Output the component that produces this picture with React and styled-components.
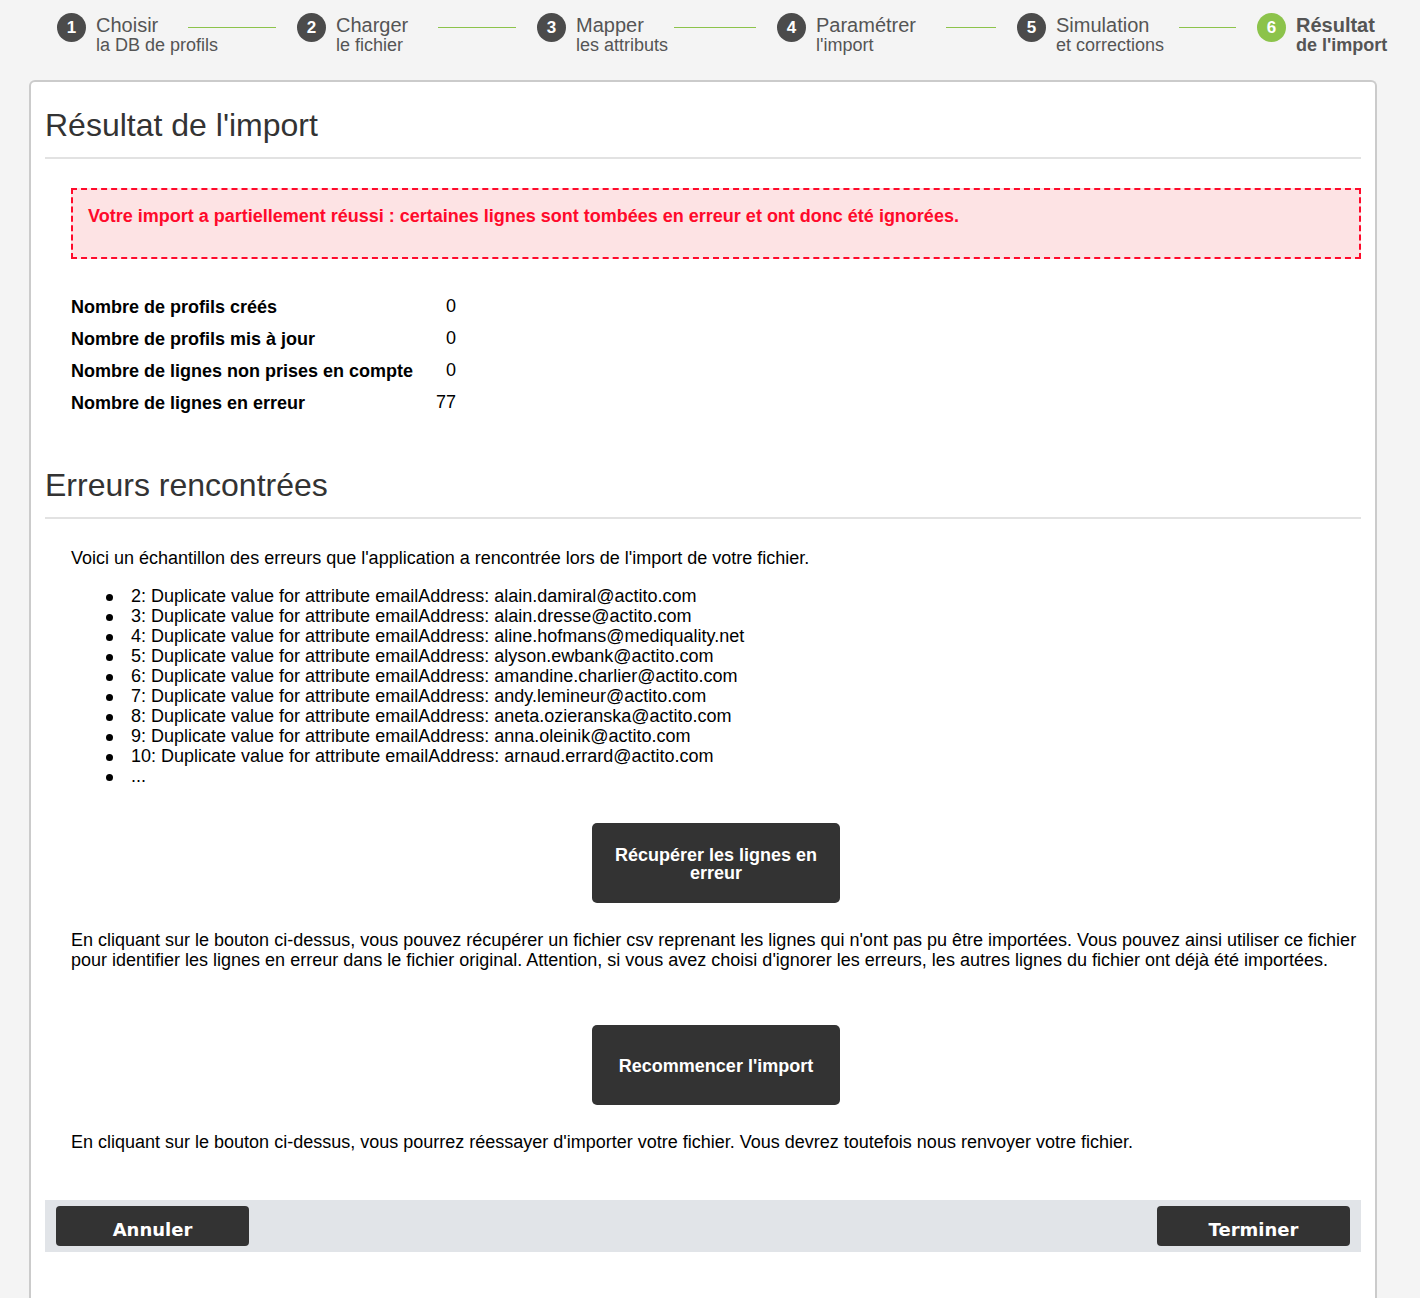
import React from "react";
import styled, { createGlobalStyle } from "styled-components";

const Global = createGlobalStyle`
  html, body { margin: 0; padding: 0; background: #f4f4f4; }
  body { font-family: "Liberation Sans", Arial, Helvetica, sans-serif; color: #000; }
  * { box-sizing: border-box; }
`;

const Stepper = styled.div`
  display: flex;
  height: 80px;
  padding: 13px 0 0 57px;
`;

const Step = styled.div`
  display: flex;
  align-items: flex-start;
  width: ${(p) => (p.$last ? "auto" : "240px")};
  flex-shrink: 0;
`;

const Circle = styled.div`
  width: 29px;
  height: 29px;
  border-radius: 50%;
  background: ${(p) => (p.$active ? "#8cc34b" : "#4b4b4b")};
  color: #fff;
  font-weight: bold;
  font-size: 17px;
  display: flex;
  align-items: center;
  justify-content: center;
  flex-shrink: 0;
  margin-right: 10px;
`;

const StepText = styled.div`
  flex: 1;
  margin-top: 2px;
  margin-right: 21px;
  color: #555;
  font-weight: ${(p) => (p.$active ? "bold" : "normal")};
`;

const StepTitleRow = styled.div`
  display: flex;
  align-items: center;
  font-size: 20px;
  line-height: 20px;
`;

const StepLine = styled.div`
  flex: 1;
  height: 1px;
  background: #8cc34b;
  margin: 4px 0 0 30px;
`;

const StepSub = styled.div`
  font-size: 18px;
  line-height: 21px;
`;

const Card = styled.div`
  margin: 0 43px 0 29px;
  background: #fff;
  border: 2px solid #cbcbcb;
  border-bottom: none;
  border-radius: 6px 6px 0 0;
  padding: 0 14px 60px;
`;

const Heading = styled.h2`
  margin: 23px 0 0;
  font-size: 32px;
  line-height: 40px;
  font-weight: normal;
  color: #333;
`;

const Rule = styled.div`
  height: 2px;
  background: #e2e2e2;
  margin-top: 12px;
`;

const Indented = styled.div`
  margin-left: 26px;
`;

const Alert = styled.div`
  margin-top: 29px;
  border: 2px dashed #ff0a2b;
  background: #fde3e4;
  padding: 16px 15px 31px;
  color: #ff0a2b;
  font-weight: bold;
  font-size: 18px;
  line-height: 20px;
`;

const Stats = styled.div`
  display: grid;
  grid-template-columns: 350px 35px;
  margin-top: 32px;
  font-size: 18px;
  line-height: 32px;
`;

const StatLabel = styled.div`
  font-weight: bold;
`;

const StatValue = styled.div`
  text-align: right;
  position: relative;
  top: -1px;
`;

const SecondHeading = styled(Heading)`
  margin-top: 46px;
`;

const Para = styled.p`
  margin: ${(p) => p.$mt || 0}px 0 0;
  font-size: 18px;
  line-height: 20px;
`;

const ErrorList = styled.ul`
  margin: 18px 0 0;
  padding-left: 60px;
  font-size: 18px;
  line-height: 20px;
  list-style: none;
`;

const ErrorItem = styled.li`
  position: relative;
  &::before {
    content: "";
    position: absolute;
    left: -25px;
    top: 8px;
    width: 7px;
    height: 7px;
    border-radius: 50%;
    background: #000;
  }
`;

const Center = styled.div`
  display: flex;
  justify-content: center;
  margin-top: ${(p) => p.$mt}px;
`;

const BigButton = styled.button`
  width: 248px;
  height: 80px;
  background: #333;
  color: #fff;
  border: none;
  border-radius: 5px;
  padding: 2px 18px 0;
  font-family: "Liberation Sans", Arial, sans-serif;
  font-weight: bold;
  font-size: 18px;
  line-height: 18px;
  cursor: pointer;
`;

const Footer = styled.div`
  margin-top: 48px;
  background: #e1e4e8;
  padding: 6px 11px;
  display: flex;
  justify-content: space-between;
`;

const FooterButton = styled.button`
  width: 193px;
  height: 40px;
  background: #333;
  color: #fff;
  border: none;
  border-radius: 4px;
  font-family: "DejaVu Sans", Verdana, sans-serif;
  font-weight: bold;
  font-size: 18px;
  padding: 7px 0 0;
  cursor: pointer;
`;

const steps = [
  ["Choisir", "la DB de profils"],
  ["Charger", "le fichier"],
  ["Mapper", "les attributs"],
  ["Paramétrer", "l'import"],
  ["Simulation", "et corrections"],
  ["Résultat", "de l'import"],
];

const errors = [
  "2: Duplicate value for attribute emailAddress: alain.damiral@actito.com",
  "3: Duplicate value for attribute emailAddress: alain.dresse@actito.com",
  "4: Duplicate value for attribute emailAddress: aline.hofmans@mediquality.net",
  "5: Duplicate value for attribute emailAddress: alyson.ewbank@actito.com",
  "6: Duplicate value for attribute emailAddress: amandine.charlier@actito.com",
  "7: Duplicate value for attribute emailAddress: andy.lemineur@actito.com",
  "8: Duplicate value for attribute emailAddress: aneta.ozieranska@actito.com",
  "9: Duplicate value for attribute emailAddress: anna.oleinik@actito.com",
  "10: Duplicate value for attribute emailAddress: arnaud.errard@actito.com",
  "...",
];

const stats = [
  ["Nombre de profils créés", "0"],
  ["Nombre de profils mis à jour", "0"],
  ["Nombre de lignes non prises en compte", "0"],
  ["Nombre de lignes en erreur", "77"],
];

export default function App() {
  return (
    <>
      <Global />
      <Stepper>
        {steps.map(([t, s], i) => {
          const last = i === steps.length - 1;
          return (
            <Step key={t} $last={last}>
              <Circle $active={last}>{i + 1}</Circle>
              <StepText $active={last}>
                <StepTitleRow>
                  <span>{t}</span>
                  {!last && <StepLine />}
                </StepTitleRow>
                <StepSub>{s}</StepSub>
              </StepText>
            </Step>
          );
        })}
      </Stepper>
      <Card>
        <Heading>Résultat de l'import</Heading>
        <Rule />
        <Indented>
          <Alert>
            Votre import a partiellement réussi : certaines lignes sont tombées en erreur et ont donc été ignorées.
          </Alert>
          <Stats>
            {stats.map(([l, v]) => (
              <React.Fragment key={l}>
                <StatLabel>{l}</StatLabel>
                <StatValue>{v}</StatValue>
              </React.Fragment>
            ))}
          </Stats>
        </Indented>
        <SecondHeading>Erreurs rencontrées</SecondHeading>
        <Rule />
        <Indented>
          <Para $mt={29}>
            Voici un échantillon des erreurs que l'application a rencontrée lors de l'import de votre fichier.
          </Para>
          <ErrorList>
            {errors.map((e) => (
              <ErrorItem key={e}>{e}</ErrorItem>
            ))}
          </ErrorList>
          <Center $mt={37}>
            <BigButton>Récupérer les lignes en erreur</BigButton>
          </Center>
          <Para $mt={27}>
            En cliquant sur le bouton ci-dessus, vous pouvez récupérer un fichier csv reprenant les lignes qui n'ont pas pu être importées. Vous pouvez ainsi utiliser ce fichier pour identifier les lignes en erreur dans le fichier original. Attention, si vous avez choisi d'ignorer les erreurs, les autres lignes du fichier ont déjà été importées.
          </Para>
          <Center $mt={55}>
            <BigButton>Recommencer l'import</BigButton>
          </Center>
          <Para $mt={27}>
            En cliquant sur le bouton ci-dessus, vous pourrez réessayer d'importer votre fichier. Vous devrez toutefois nous renvoyer votre fichier.
          </Para>
        </Indented>
        <Footer>
          <FooterButton>Annuler</FooterButton>
          <FooterButton>Terminer</FooterButton>
        </Footer>
      </Card>
    </>
  );
}
